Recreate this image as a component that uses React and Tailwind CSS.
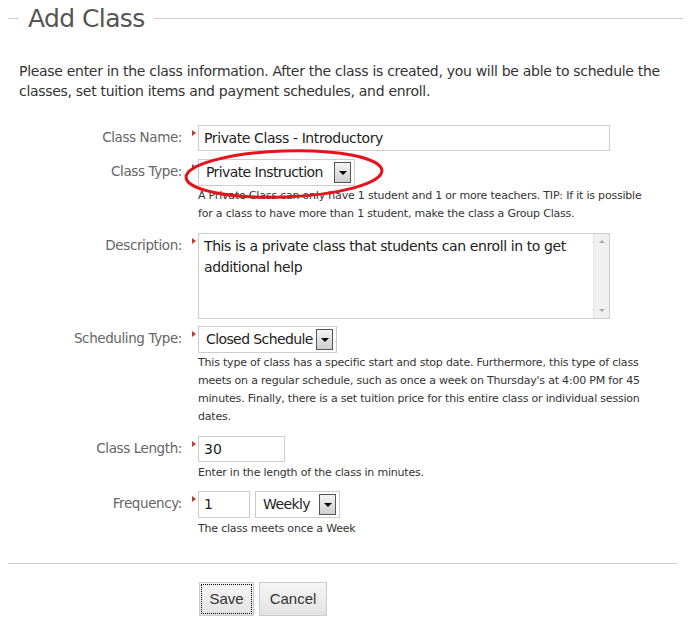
import React from 'react';

const font = { fontFamily: '"DejaVu Sans", Verdana, sans-serif' };

const Marker = () => (
  <div className="w-[16px] flex justify-end pr-[2px] pt-[5px] shrink-0">
    <div className="w-0 h-0 border-t-[3px] border-b-[3px] border-l-[4px] border-t-transparent border-b-transparent border-l-[#c0392b]"></div>
  </div>
);

const Label = ({ children }) => (
  <div className="w-[182px] shrink-0 text-right text-[13.5px] text-[#666] tracking-[-0.4px] pt-[2px]">{children}</div>
);

const Arrow = () => (
  <div className="w-[17px] h-[21px] border border-[#555] bg-gradient-to-b from-[#f4f4f4] to-[#cfcfcf] flex items-center justify-center shrink-0">
    <div className="w-0 h-0 border-l-[4px] border-r-[4px] border-t-[4px] border-l-transparent border-r-transparent border-t-black"></div>
  </div>
);

const Select = ({ value, w }) => (
  <div className={`${w} h-[27px] border border-[#ccc] bg-white flex items-center justify-between pl-[7px] pr-[3px]`}>
    <span className="whitespace-nowrap text-[14px] text-[#222] tracking-[-0.6px]">{value}</span>
    <Arrow />
  </div>
);

const Help = ({ children, className = '' }) => (
  <p className={`text-[11px] leading-[18px] text-[#333] tracking-[-0.2px] ${className}`}>{children}</p>
);

export default function App() {
  return (
    <div className="relative bg-white w-[692px] h-[624px] overflow-hidden" style={font}>
      {/* header */}
      <div className="flex items-center pl-[8px] pr-[9px] h-[36px]">
        <div className="w-[11px] h-px bg-[#ccc]"></div>
        <h1 className="mx-[9px] text-[25px] text-[#555] tracking-[-0.6px] leading-none">Add Class</h1>
        <div className="flex-1 h-px bg-[#ccc]"></div>
      </div>

      <p className="mt-[25px] ml-[19px] w-[660px] text-[14px] leading-[20px] text-[#333] tracking-[-0.3px]">
        Please enter in the class information. After the class is created, you will be able to schedule the classes, set tuition items and payment schedules, and enroll.
      </p>

      <div className="mt-[24px] flex flex-col">
        <div className="flex">
          <Label>Class Name:</Label>
          <Marker />
          <div className="w-[412px] h-[26px] border border-[#ccc] flex items-center px-[5px] text-[14px] text-[#222] tracking-[-0.4px]">Private Class - Introductory</div>
        </div>

        <div className="flex mt-[8px]">
          <Label>Class Type:</Label>
          <Marker />
          <div className="flex flex-col">
            <Select value="Private Instruction" w="w-[157px]" />
            <Help className="w-[450px] mt-[1px]">A Private Class can only have 1 student and 1 or more teachers. TIP: If it is possible for a class to have more than 1 student, make the class a Group Class.</Help>
          </div>
        </div>

        <div className="flex mt-[10px]">
          <Label>Description:</Label>
          <Marker />
          <div className="w-[412px] h-[86px] border border-[#ccc] flex">
            <p className="flex-1 px-[5px] pt-[2px] text-[14px] leading-[21px] text-[#222] tracking-[-0.4px]">This is a private class that students can enroll in to get additional help</p>
            <div className="w-[16px] bg-[#f0f0f0] border-l border-[#e6e6e6] flex flex-col justify-between items-center py-[6px]">
              <div className="w-0 h-0 border-l-[3px] border-r-[3px] border-b-[3px] border-l-transparent border-r-transparent border-b-[#aaa]"></div>
              <div className="w-0 h-0 border-l-[3px] border-r-[3px] border-t-[3px] border-l-transparent border-r-transparent border-t-[#aaa]"></div>
            </div>
          </div>
        </div>

        <div className="flex mt-[7px]">
          <Label>Scheduling Type:</Label>
          <Marker />
          <div className="flex flex-col">
            <Select value="Closed Schedule" w="w-[139px]" />
            <Help className="w-[472px] mt-[1px]">This type of class has a specific start and stop date. Furthermore, this type of class meets on a regular schedule, such as once a week on Thursday's at 4:00 PM for 45 minutes. Finally, there is a set tuition price for this entire class or individual session dates.</Help>
          </div>
        </div>

        <div className="flex mt-[10px]">
          <Label>Class Length:</Label>
          <Marker />
          <div className="flex flex-col">
            <div className="w-[87px] h-[26px] border border-[#ccc] flex items-center px-[5px] text-[14px] text-[#222]">30</div>
            <Help className="mt-[2px]">Enter in the length of the class in minutes.</Help>
          </div>
        </div>

        <div className="flex mt-[9px]">
          <Label>Frequency:</Label>
          <Marker />
          <div className="flex flex-col">
            <div className="flex gap-[5px]">
              <div className="w-[52px] h-[27px] border border-[#ccc] flex items-center px-[5px] text-[14px] text-[#222]">1</div>
              <Select value="Weekly" w="w-[85px]" />
            </div>
            <Help className="mt-[2px]">The class meets once a Week</Help>
          </div>
        </div>
      </div>

      <div className="mt-[25px] ml-[8px] w-[669px] h-px bg-[#ccc]"></div>

      <div className="mt-[18px] ml-[199px] flex gap-[5px]" style={{ fontFamily: '"Liberation Sans", Arial, sans-serif' }}>
        <button className="w-[55px] h-[34px] border border-[#ccc] bg-gradient-to-b from-[#f6f6f6] to-[#e2e2e2] p-[2px]">
          <span className="flex items-center justify-center w-full h-full outline-1 outline-dotted outline-black text-[15px] text-[#333]">Save</span>
        </button>
        <button className="w-[68px] h-[34px] border border-[#ccc] bg-gradient-to-b from-[#f6f6f6] to-[#e2e2e2] text-[15px] text-[#333]">Cancel</button>
      </div>

      {/* hand-drawn highlight */}
      <svg className="absolute left-0 top-0 pointer-events-none" width="692" height="624">
        <ellipse cx="284" cy="174" rx="98" ry="23" fill="none" stroke="#e3141c" strokeWidth="3" transform="rotate(-2 284 174)" />
      </svg>
    </div>
  );
}
